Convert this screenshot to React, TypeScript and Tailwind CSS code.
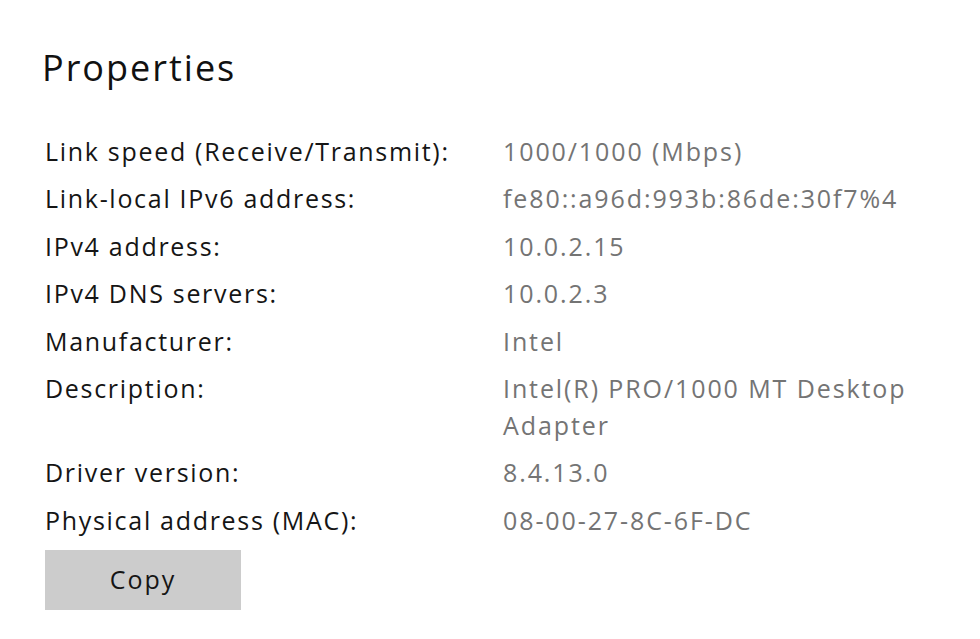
import React from 'react';

interface Prop {
  label: string;
  value: string;
}

const props: Prop[] = [
  { label: 'Link speed (Receive/Transmit):', value: '1000/1000 (Mbps)' },
  { label: 'Link-local IPv6 address:', value: 'fe80::a96d:993b:86de:30f7%4' },
  { label: 'IPv4 address:', value: '10.0.2.15' },
  { label: 'IPv4 DNS servers:', value: '10.0.2.3' },
  { label: 'Manufacturer:', value: 'Intel' },
  { label: 'Description:', value: 'Intel(R) PRO/1000 MT Desktop Adapter' },
  { label: 'Driver version:', value: '8.4.13.0' },
  { label: 'Physical address (MAC):', value: '08-00-27-8C-6F-DC' },
];

export default function App() {
  return (
    <div className="min-h-[639px] w-[980px] bg-white pl-[42px] pt-[43px] font-['Open_Sans','Noto_Sans',sans-serif]">
      <h1 className="text-[36px] leading-[50px] tracking-[2px] text-[#111]">Properties</h1>

      {/* property rows */}
      <div className="mt-[40px] flex flex-col gap-[10.4px]">
        {props.map((p) => (
          <div key={p.label} className="flex text-[25px] leading-[37px]">
            <div className="w-[461px] shrink-0 pl-[3px] tracking-[1.7px] text-[#151515]">{p.label}</div>
            <div className="w-[440px] tracking-[1.9px] text-[#747474]">{p.value}</div>
          </div>
        ))}
      </div>

      <button className="ml-[3px] mt-[11px] h-[60px] w-[196px] bg-[#cccccc] text-[25px] tracking-[2px] text-[#151515]">
        Copy
      </button>
    </div>
  );
}
